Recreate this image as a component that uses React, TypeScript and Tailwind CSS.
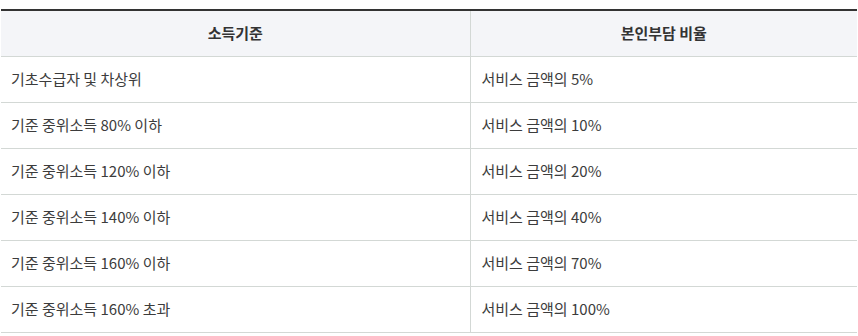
import React from "react";

const rows: [string, string][] = [
  ["기초수급자 및 차상위", "서비스 금액의 5%"],
  ["기준 중위소득 80% 이하", "서비스 금액의 10%"],
  ["기준 중위소득 120% 이하", "서비스 금액의 20%"],
  ["기준 중위소득 140% 이하", "서비스 금액의 40%"],
  ["기준 중위소득 160% 이하", "서비스 금액의 70%"],
  ["기준 중위소득 160% 초과", "서비스 금액의 100%"],
];

export default function App() {
  return (
    <div
      className="w-[858px] h-[336px] bg-white pt-[9px] pl-px"
      style={{ fontFamily: '"Noto Sans CJK KR", "Noto Sans", sans-serif' }}
    >
      <table className="w-[856px] border-collapse border-t-2 border-[#333333] text-[15px] leading-[20px] text-[#333333] table-fixed">
        <colgroup>
          <col className="w-[469px]" />
          <col />
        </colgroup>
        <thead>
          <tr className="h-[46px] bg-[#f4f5f8]">
            <th className="border-b border-r border-[#d3d8d5] font-bold text-center align-middle">소득기준</th>
            <th className="border-b border-[#d3d8d5] font-bold text-center align-middle">본인부담 비율</th>
          </tr>
        </thead>
        <tbody>
          {rows.map(([a, b], i) => (
            <tr key={i} className="h-[46px] text-[#3c3c3c]">
              <td className="border-b border-r border-[#d3d8d5] pl-[10px] align-middle">{a}</td>
              <td className="border-b border-[#d3d8d5] pl-[11px] align-middle">{b}</td>
            </tr>
          ))}
        </tbody>
      </table>
    </div>
  );
}
